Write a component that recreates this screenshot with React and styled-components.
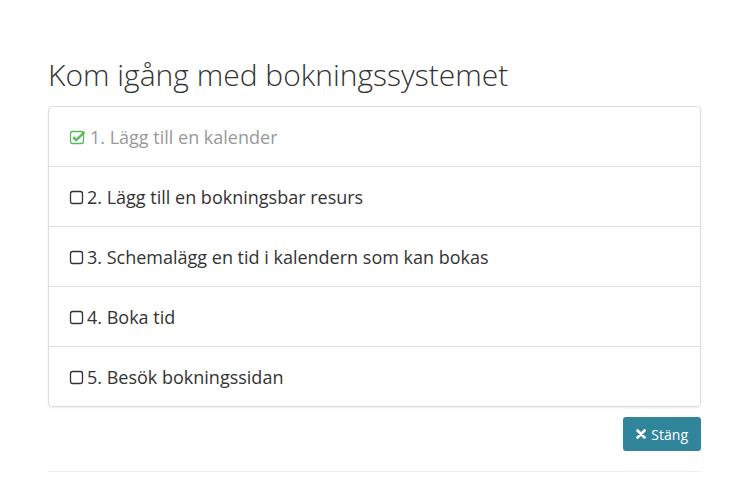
import styled, { createGlobalStyle } from 'styled-components';

const GlobalStyle = createGlobalStyle`
    body {
        margin: 0;
        background: #ffffff;
        font-family: "Open Sans", "Noto Sans", sans-serif;
        color: #333333;
    }
`;

const steps = [
    { text: '1. Lägg till en kalender', done: true },
    { text: '2. Lägg till en bokningsbar resurs', done: false },
    { text: '3. Schemalägg en tid i kalendern som kan bokas', done: false },
    { text: '4. Boka tid', done: false },
    { text: '5. Besök bokningssidan', done: false },
];

function SquareIcon() {
    return (
        <svg width="15" height="15" viewBox="0 0 15 15">
            <rect x="1.5" y="1.5" width="12" height="12" rx="2.2" fill="none" stroke="#333" strokeWidth="1.3" />
        </svg>
    );
}

function CheckSquareIcon() {
    return (
        <svg width="18" height="15" viewBox="0 0 18 15">
            <rect x="1.5" y="1.5" width="13" height="12" rx="2.2" fill="none" stroke="#5cb85c" strokeWidth="1.3" />
            <path d="M4.2 7.2 L7.2 10 L15.5 2.2" fill="none" stroke="#5cb85c" strokeWidth="2.4" />
        </svg>
    );
}

export default function App() {
    return (
        <Page>
            <GlobalStyle />
            <Title>Kom igång med bokningssystemet</Title>
            <List>
                {steps.map(step => (
                    <Item key={step.text} done={step.done}>
                        {step.done ? <CheckSquareIcon /> : <SquareIcon />}
                        <span>{step.text}</span>
                    </Item>
                ))}
            </List>
            <Actions>
                <CloseButton>
                    <svg width="10" height="10" viewBox="0 0 10 10">
                        <path d="M1.5 1.5 L8.5 8.5 M8.5 1.5 L1.5 8.5" stroke="#fff" strokeWidth="2.6" strokeLinecap="round" />
                    </svg>
                    Stäng
                </CloseButton>
            </Actions>
            <Divider />
        </Page>
    );
}

const Page = styled.div`
    width: 653px;
    padding: 58px 0 0 48px;
`;

const Title = styled.h1`
    margin: 0 0 15px;
    font-size: 30px;
    font-weight: 300;
    line-height: 33px;
    color: #333333;
`;

const List = styled.div`
    border: 1px solid #dddddd;
    border-radius: 4px;
    box-shadow: 0 1px 2px rgba(0, 0, 0, 0.08);
`;

const Item = styled.div`
    display: flex;
    align-items: center;
    gap: 3px;
    height: 59px;
    padding: 0 20px;
    font-size: 18px;
    color: ${props => props.done ? '#999999' : '#333333'};
    & + & {
        border-top: 1px solid #dddddd;
    }
    svg {
        margin-top: 1px;
    }
`;

const Actions = styled.div`
    display: flex;
    justify-content: flex-end;
    margin-top: 10px;
`;

const CloseButton = styled.button`
    display: flex;
    align-items: center;
    gap: 5px;
    height: 34px;
    padding: 0 13px;
    border: none;
    border-radius: 3px;
    background: #31859b;
    color: #ffffff;
    font-family: "Open Sans", sans-serif;
    font-size: 14px;
`;

const Divider = styled.hr`
    margin: 20px 0 0;
    border: none;
    border-top: 1px solid #eeeeee;
`;
